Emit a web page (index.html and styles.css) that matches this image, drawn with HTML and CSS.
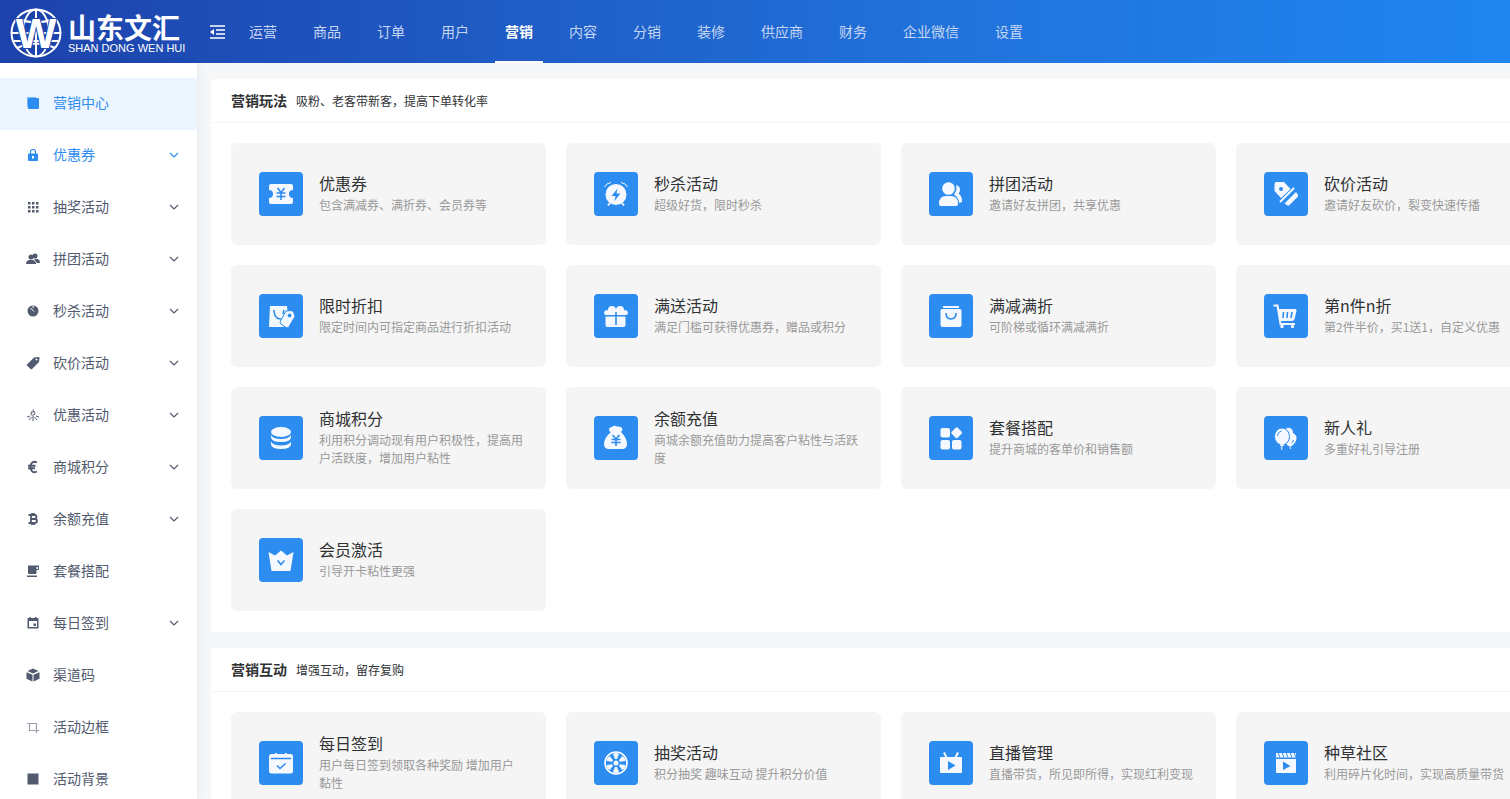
FILE: index.html
```html
<!DOCTYPE html>
<html lang="zh-CN">
<head>
    <meta charset="UTF-8">
    <meta name="viewport" content="width=device-width, initial-scale=1.0">
    <title>营销中心</title>
    <link rel="stylesheet" href="styles.css">
</head>

<body>

  <svg class="sprite" aria-hidden="true">
    <symbol id="arrow" viewBox="0 0 10 10"><path d="M1 3l4 4 4-4" fill="none" stroke="currentColor" stroke-width="1.2"/></symbol>
  </svg>

  <header class="header">
    <a class="logo" href="#" aria-label="山东文汇">
      <svg class="logoGlobe" viewBox="0 0 52 50">
        <g fill="none" stroke="#fff" stroke-width="2">
          <ellipse cx="26" cy="25" rx="24.5" ry="23.5"/>
          <ellipse cx="26" cy="25" rx="13" ry="23.5"/>
          <path d="M26 1v48M2 25h48M7 10q19 9 38 0M7 40q19-9 38 0M4 33h44"/>
        </g>
        <text class="logoW" x="26" y="40" text-anchor="middle">W</text>
      </svg>
      <span class="logoText">
        <span class="logoCn">山东文汇</span>
        <span class="logoEn">SHAN DONG WEN HUI</span>
      </span>
    </a>

    <button class="toggle" type="button" aria-label="收起菜单">
      <svg viewBox="0 0 16 14"><path d="M0 1h15M6 5h9M6 9h9M0 13h15" stroke="#fff" stroke-width="1.6"/><path d="M0 7l4-3v6z" fill="#fff"/></svg>
    </button>

    <nav class="tabs">
      <a href="#">运营</a>
      <a href="#">商品</a>
      <a href="#">订单</a>
      <a href="#">用户</a>
      <a href="#" class="current">营销</a>
      <a href="#">内容</a>
      <a href="#">分销</a>
      <a href="#">装修</a>
      <a href="#">供应商</a>
      <a href="#">财务</a>
      <a href="#">企业微信</a>
      <a href="#">设置</a>
    </nav>
  </header>

  <div class="main">

    <nav class="sidebar">
      <a class="item active" href="#">
        <svg class="icon" viewBox="0 0 14 14"><path d="M1 1h9v1H2v9H1z" opacity=".6"/><rect x="2" y="2" width="11" height="11" rx="1"/></svg>
        <span>营销中心</span>
      </a>
      <button class="item open" type="button">
        <svg class="icon" viewBox="0 0 14 14"><path d="M4.500 6V4a2.500 2.500 0 0 1 5 0v2" fill="none" stroke="currentColor" stroke-width="1.200"/><path fill-rule="evenodd" d="M3 5.500h8q1 0 1 1V12q0 1-1 1H3q-1 0-1-1V6.500q0-1 1-1zM6 8v2.500h2V8z"/></svg>
        <span>优惠券</span><svg class="arrow"><use href="#arrow"/></svg>
      </button>
      <button class="item" type="button">
        <svg class="icon" viewBox="0 0 14 14"><path d="M2 2h2.500v2.500H2zM6 2h2.500v2.500H6zM10 2h2.500v2.500H10zM2 6h2.500v2.500H2zM6 6h2.500v2.500H6zM10 6h2.500v2.500H10zM2 10h2.500v2.500H2zM6 10h2.500v2.500H6zM10 10h2.500v2.500H10z"/></svg>
        <span>抽奖活动</span><svg class="arrow"><use href="#arrow"/></svg>
      </button>
      <button class="item" type="button">
        <svg class="icon" viewBox="0 0 14 14"><circle cx="9" cy="4" r="2.500"/><path d="M8 7h4q2 1 2 4h-3z"/><circle cx="5" cy="5" r="2.500"/><path d="M0 12q0-3 3-4h4q3 1 3 4z"/></svg>
        <span>拼团活动</span><svg class="arrow"><use href="#arrow"/></svg>
      </button>
      <button class="item" type="button">
        <svg class="icon" viewBox="0 0 14 14"><circle cx="7" cy="7" r="5.500"/><path d="M4.500 4L8 7.500M7 2v2" stroke="#fff" fill="none"/></svg>
        <span>秒杀活动</span><svg class="arrow"><use href="#arrow"/></svg>
      </button>
      <button class="item" type="button">
        <svg class="icon" viewBox="0 0 14 14"><path fill-rule="evenodd" d="M8 1.500l4.500-.5q1 0 1 1L13 6 6 13q-1 .5-1.500 0L1 9.500q-.5-.5 0-1zM10.500 2.500a1 1 0 1 0 .1 2 1 1 0 0 0-.1-2z"/></svg>
        <span>砍价活动</span><svg class="arrow"><use href="#arrow"/></svg>
      </button>
      <button class="item" type="button">
        <svg class="icon" viewBox="0 0 14 14"><g fill="none" stroke="currentColor"><path d="M8 1.500q-4 2.500-3 5 1 1.500 3.500 0 1-2-.5-3.500L6.500 5M7 8v5M5.500 9L3 12M8.500 9l2.500 3M1 9l3-1M13 9l-3-1"/></g></svg>
        <span>优惠活动</span><svg class="arrow"><use href="#arrow"/></svg>
      </button>
      <button class="item" type="button">
        <svg class="icon" viewBox="0 0 14 14"><path d="M11 2.500C7 .5 4.500 3 4.500 7s2.500 6.500 6.500 4.500M2 5.800h7.500M2 8.300h7" fill="none" stroke="currentColor" stroke-width="1.900"/></svg>
        <span>商城积分</span><svg class="arrow"><use href="#arrow"/></svg>
      </button>
      <button class="item" type="button">
        <svg class="icon" viewBox="0 0 14 14"><path d="M2.500 3h6q2 0 2 2t-2 2H5M8.500 7Q11 7 11 9t-2.500 2h-6M5 3v8M6 1v2M8 1v2M6 11v2M8 11v2" fill="none" stroke="currentColor" stroke-width="1.800"/></svg>
        <span>余额充值</span><svg class="arrow"><use href="#arrow"/></svg>
      </button>
      <a class="item" href="#">
        <svg class="icon" viewBox="0 0 14 14"><path fill-rule="evenodd" d="M2 1.500h11v4.500h-2.500v3q0 1-1 1H3q-1 0-1-1zM10.500 3v2H12V3zM1 11.500h10V13H1z"/></svg>
        <span>套餐搭配</span>
      </a>
      <button class="item" type="button">
        <svg class="icon" viewBox="0 0 14 14"><path fill-rule="evenodd" d="M3.500 1H5v1h4V1h1.500v1H12q.5 0 .5.500V12q0 .5-.5.500H2q-.5 0-.5-.5V2.500Q1.500 2 2 2h1.500zM3 5v6h8V5zM7.500 7.500H10V10H7.500z"/></svg>
        <span>每日签到</span><svg class="arrow"><use href="#arrow"/></svg>
      </button>
      <a class="item" href="#">
        <svg class="icon" viewBox="0 0 14 14"><path d="M7 .5l5.500 2.500L7 5.500 1.500 3zM.5 4.200l6 2.600V13.500l-6-2.800zM13.500 4.200l-6 2.600V13.500l6-2.800z"/></svg>
        <span>渠道码</span>
      </a>
      <a class="item pale" href="#">
        <svg class="icon" viewBox="0 0 14 14"><path d="M1 3.500h9.500V13M3.500 3.500v7H13" fill="none" stroke="currentColor" stroke-width="1.200"/></svg>
        <span>活动边框</span>
      </a>
      <a class="item" href="#">
        <svg class="icon" viewBox="0 0 14 14"><path d="M1.500 1.500h11v11h-11z"/></svg>
        <span>活动背景</span>
      </a>
    </nav>

    <main class="content">

      <section class="panel">
        <div class="panelHead"><h2>营销玩法</h2><p>吸粉、老客带新客，提高下单转化率</p></div>
        <div class="cards">

          <a class="card" href="#">
            <svg class="tile" viewBox="0 0 44 44"><path class="w" d="M12 12h20q2 0 2 2v4a4 4 0 0 0 0 8v4q0 2-2 2H12q-2 0-2-2v-4a4 4 0 0 0 0-8v-4q0-2 2-2z"/><path class="b" d="M18.500 16l3.500 4.500 3.500-4.500M22 20.500V28M17.500 21h9M17.500 24.500h9"/></svg>
            <div><h3>优惠券</h3><p>包含满减券、满折券、会员券等</p></div>
          </a>
          <a class="card" href="#">
            <svg class="tile" viewBox="0 0 44 44"><path class="s thin" d="M10.500 15q2-4 6.500-4.500M33.500 15q-2-4-6.500-4.500"/><path class="s" d="M16 31l-2 2.500M28 31l2 2.500"/><circle class="w" cx="22" cy="22.500" r="10.500"/><path class="f" d="M23.500 16.500L17.500 24h4l-1 5 6-7.500h-4z"/></svg>
            <div><h3>秒杀活动</h3><p>超级好货，限时秒杀</p></div>
          </a>
          <a class="card" href="#">
            <svg class="tile" viewBox="0 0 44 44"><circle class="w" cx="19.500" cy="16.500" r="6.300"/><path class="w" d="M10 32q0-8 7-8h5q7 0 7 8 0 2-2 2H12q-2 0-2-2z"/><path class="w" d="M27 13q4 1 4 4.500 0 2.500-1.500 4 4 2.500 3.500 8.500l-3 1q0-5-5-8.500 3.500-4 2-9.500z"/></svg>
            <div><h3>拼团活动</h3><p>邀请好友拼团，共享优惠</p></div>
          </a>
          <a class="card" href="#">
            <svg class="tile" viewBox="0 0 44 44"><path class="w" fill-rule="evenodd" d="M12.500 10H20l6.500 7L17 26l-6.500-7v-7q0-2 2-2zM17 15a2 2 0 1 0 .1 4 2 2 0 0 0-.1-4z"/><path class="s" d="M16 30L30 16"/><path class="w" d="M32 20l2 3q.5 1-.5 2l-8 8q-1 1-2 .5l-3-2z"/></svg>
            <div><h3>砍价活动</h3><p>邀请好友砍价，裂变快速传播</p></div>
          </a>

          <a class="card" href="#">
            <svg class="tile" viewBox="0 0 44 44"><path class="w" d="M11 12h17l2 21H10z"/><path class="b" d="M15 16q0 9 7 9"/><path class="b" d="M25 16l-1 4"/><path class="w rim" fill-rule="evenodd" d="M27 17l6-.5q2.500 2 3 6l-6 10q-1 2-3 1l-5-3.500q-1.500-1-.5-3zM30.500 20a1.500 1.500 0 1 0 .1 3 1.500 1.500 0 0 0-.1-3z"/></svg>
            <div><h3>限时折扣</h3><p>限定时间内可指定商品进行折扣活动</p></div>
          </a>
          <a class="card" href="#">
            <svg class="tile" viewBox="0 0 44 44"><path class="w" d="M14 16q0-4 4-4 3 0 4 3 1-3 4-3 4 0 4 4 4 0 4 3 0 2-2 2H12q-2 0-2-2 0-3 4-3zM11.500 22.500h20V31q0 2-2 2h-16q-2 0-2-2z"/><path class="b" d="M22 18v13"/></svg>
            <div><h3>满送活动</h3><p>满足门槛可获得优惠券，赠品或积分</p></div>
          </a>
          <a class="card" href="#">
            <svg class="tile" viewBox="0 0 44 44"><path class="w" d="M14 12h16v2H14zM13 15h18q1.500 0 1.500 1.500V31q0 2-2 2h-17q-2 0-2-2V16.500Q11.500 15 13 15z"/><path class="b" d="M17 19q0 6 5 6t5-6"/></svg>
            <div><h3>满减满折</h3><p>可阶梯或循环满减满折</p></div>
          </a>
          <a class="card" href="#">
            <svg class="tile" viewBox="0 0 44 44"><path class="w" d="M14 15h17q2 0 1.500 2l-2 8q-.5 2-2.500 2H16z"/><path class="s" d="M9.500 11.500h4L16.500 30H31"/><path class="b" d="M19.500 18l-.5 6M23.500 18l-.5 6M28 18l-1 6"/><circle class="w" cx="18" cy="32.500" r="1.700"/><circle class="w" cx="28.500" cy="32.500" r="1.700"/></svg>
            <div><h3>第n件n折</h3><p>第2件半价，买1送1，自定义优惠</p></div>
          </a>

          <a class="card" href="#">
            <svg class="tile" viewBox="0 0 44 44"><ellipse class="w" cx="22" cy="16" rx="10" ry="5"/><path class="w" d="M12 19q2 4 10 4t10-4v2q0 5-10 5t-10-5zM12 25.500q2 4 10 4t10-4V28q0 5-10 5t-10-5z"/></svg>
            <div><h3>商城积分</h3><p>利用积分调动现有用户积极性，提高用户活跃度，增加用户粘性</p></div>
          </a>
          <a class="card" href="#">
            <svg class="tile" viewBox="0 0 44 44"><path class="w" d="M15 14q0-3 3-3 2-2 5-.5 5-.5 5.500 3-.5 2-2 2.500h-9Q15 16 15 14zM17 16h10q6 6 6 12 0 5-5 5H15q-5 0-5-5 0-6 7-12z"/><path class="b" d="M18.500 19l3.500 4 3.500-4M22 23v7M17.500 23.500h9M17.500 26.500h9"/></svg>
            <div><h3>余额充值</h3><p>商城余额充值助力提高客户粘性与活跃度</p></div>
          </a>
          <a class="card" href="#">
            <svg class="tile" viewBox="0 0 44 44"><g class="w"><rect x="11.500" y="12" width="9.500" height="9.500" rx="2"/><rect x="11.500" y="24" width="9.500" height="9.500" rx="2"/><rect x="23" y="24" width="9.500" height="9.500" rx="2"/><rect x="23.500" y="12.500" width="8.500" height="8.500" rx="1.500" transform="rotate(45 27.700 16.700)"/></g></svg>
            <div><h3>套餐搭配</h3><p>提升商城的客单价和销售额</p></div>
          </a>
          <a class="card" href="#">
            <svg class="tile" viewBox="0 0 44 44"><path class="w" d="M21 15q1-4 5-3 3 1 3 5 4 2 3.500 6-1 5-5.500 7h-2q-4-2-4-5z"/><ellipse class="w rim" cx="18" cy="20.500" rx="7.500" ry="8.500"/><path class="b thin" d="M13.500 20q0-4 4-5M29.500 24q0 2-2 3"/><path class="w" d="M16.500 28h3l.5 2h-4zM25 28.500h3l.5 1.500h-4z"/><path class="s thin" d="M18 30q-1 2 0 4M26.500 30q-1 1 0 3"/></svg>
            <div><h3>新人礼</h3><p>多重好礼引导注册</p></div>
          </a>

          <a class="card" href="#">
            <svg class="tile" viewBox="0 0 44 44"><path class="w" d="M9.500 14l6.500 3.500 6-5 6 5 6.500-3.500L31.500 33h-19z"/><path class="b" d="M18.500 22.500l3.500 4 3.500-4"/></svg>
            <div><h3>会员激活</h3><p>引导开卡粘性更强</p></div>
          </a>
        </div>
      </section>

      <section class="panel">
        <div class="panelHead"><h2>营销互动</h2><p>增强互动，留存复购</p></div>
        <div class="cards">

          <a class="card" href="#">
            <svg class="tile" viewBox="0 0 44 44"><path class="w" d="M12.500 13h19q2.500 0 2.500 2.500V30q0 2.500-2.500 2.500h-19Q10 32.500 10 30V15.500Q10 13 12.500 13z"/><path class="b" d="M12 17.500h20"/><path class="s" d="M17 12v4M27 12v4"/><path class="b" d="M18 24.500l3 3 5.500-5"/></svg>
            <div><h3>每日签到</h3><p>用户每日签到领取各种奖励 增加用户黏性</p></div>
          </a>
          <a class="card" href="#">
            <svg class="tile" viewBox="0 0 44 44"><circle cx="22" cy="22" r="11" fill="none" stroke="#fff" stroke-width="1.600"/><g class="w"><path id="blade" d="M21 18l-2-5q3-2 6 0l-2 5z"/><use href="#blade" transform="rotate(60 22 22)"/><use href="#blade" transform="rotate(120 22 22)"/><use href="#blade" transform="rotate(180 22 22)"/><use href="#blade" transform="rotate(240 22 22)"/><use href="#blade" transform="rotate(300 22 22)"/><circle cx="22" cy="22" r="2.500"/></g></svg>
            <div><h3>抽奖活动</h3><p>积分抽奖 趣味互动 提升积分价值</p></div>
          </a>
          <a class="card" href="#">
            <svg class="tile" viewBox="0 0 44 44"><path class="w" d="M12 16h20q1 0 1 1v14q0 1-1 1H12q-1 0-1-1V17q0-1 1-1z"/><path class="s" d="M15 11.500l2.500 5M29 11.500l-2.500 5"/><path class="f" d="M19 20l7.500 4.500-7.500 4.500z"/></svg>
            <div><h3>直播管理</h3><p>直播带货，所见即所得，实现红利变现</p></div>
          </a>
          <a class="card" href="#">
            <svg class="tile" viewBox="0 0 44 44"><path class="w" d="M12 12h20v4.500H12zM12 18h20v13q0 1-1 1H13q-1 0-1-1z"/><path class="b thin" d="M14 11.500l2 5M18 11.500l2 5M22 11.500l2 5M26 11.500l2 5M30 11.500l2 5"/><path class="f" d="M19 20.500l7.500 4.500-7.500 4z"/></svg>
            <div><h3>种草社区</h3><p>利用碎片化时间，实现高质量带货</p></div>
          </a>
        </div>
      </section>

    </main>
  </div>

</body>
</html>
```

FILE: styles.css
```css
* {
  box-sizing: border-box;
  margin: 0;
  padding: 0;
}

body {
  display: flex;
  flex-direction: column;
  height: 100vh;
  overflow: hidden;
  background: #f5f7f9;
  color: #515a6e;
  font-family: "Noto Sans CJK SC", sans-serif;
  font-size: 14px;
}

a {
  color: inherit;
  text-decoration: none;
}

button {
  border: none;
  background: none;
  font: inherit;
  color: inherit;
  cursor: pointer;
}

.sprite {
  position: absolute;
  width: 0;
  height: 0;
}

/* Topo */

.header {
  display: flex;
  flex: none;
  min-width: 1920px;
  height: 63px;
  background: linear-gradient(90deg, #1d42ab, #2173dc, #1e93ff);
}

.logo {
  display: flex;
  align-items: center;
  gap: 6px;
  width: 210px;
  padding: 3px 0 0 10px;
  color: #fff;
}

.logoGlobe {
  width: 52px;
  height: 50px;
}

.logoW {
  font: bold 43px "Liberation Sans", sans-serif;
  fill: #fff;
  stroke: #1e47b0;
  stroke-width: 2px;
  paint-order: stroke;
}

.logoText {
  display: flex;
  flex-direction: column;
}

.logoCn {
  font-size: 28px;
  font-weight: bold;
  line-height: 30px;
}

.logoEn {
  font: 11px/12px "Liberation Sans", sans-serif;
  white-space: nowrap;
}

.toggle {
  width: 16px;
}

.toggle svg {
  display: block;
  width: 16px;
  height: 14px;
}

.tabs {
  display: flex;
  gap: 16px;
  margin-left: 13px;
}

.tabs a {
  padding: 0 10px;
  line-height: 63px;
  color: #c6d6f3;
  white-space: nowrap;
}

.tabs .current {
  color: #fff;
  font-weight: bold;
  box-shadow: inset 0 -2px #fff;
}

/* Menu lateral */

.main {
  display: flex;
  flex: 1;
  min-height: 0;
}

.sidebar {
  flex: none;
  width: 197px;
  padding-top: 15px;
  overflow: hidden;
  background: #fff;
  box-shadow: 2px 0 8px rgba(29, 35, 41, 0.06);
}

.item {
  display: flex;
  align-items: center;
  width: 100%;
  height: 52px;
  padding: 0 18px 2px 26px;
  text-align: left;
}

.item.active {
  background: #edf5ff;
  color: #2d8cf0;
}

.item.open {
  color: #2d8cf0;
}

.item span {
  flex: 1;
  margin-left: 13px;
  padding-bottom: 2px;
}

.icon {
  width: 14px;
  height: 14px;
  fill: currentColor;
}

.pale .icon {
  color: #9ba1ad;
}

.arrow {
  width: 10px;
  height: 10px;
}

/* Conteudo */

.content {
  flex: 1;
  padding: 16px 14px;
}

.panel {
  min-width: 1360px;
  margin-bottom: 16px;
  border-radius: 4px;
  background: #fff;
}

.panelHead {
  display: flex;
  align-items: center;
  gap: 9px;
  height: 44px;
  padding: 0 20px;
  border-bottom: 1px solid #f3f4f5;
  color: #303133;
}

.panelHead h2 {
  padding-bottom: 2px;
  font-size: 14px;
}

.panelHead p {
  font-size: 12px;
}

.cards {
  display: grid;
  grid-template-columns: repeat(auto-fill, 315px);
  gap: 20px;
  padding: 20px 20px 21px;
}

.card {
  display: flex;
  align-items: center;
  gap: 16px;
  height: 102px;
  padding: 0 22px 0 28px;
  border-radius: 6px;
  background: #f5f5f5;
}

.card div {
  padding-bottom: 2px;
}

.card h3 {
  padding-bottom: 2px;
  font-size: 16px;
  font-weight: normal;
  line-height: 22px;
  color: #303133;
}

.card p {
  font-size: 12px;
  line-height: 18px;
  color: #999;
}

/* Icones dos cards */

.tile {
  flex: none;
  width: 44px;
  height: 44px;
  border-radius: 4px;
  background: #2d8cf0;
}

.w {
  fill: #f5f9ff;
}

.f {
  fill: #2d8cf0;
}

.b,
.s {
  fill: none;
  stroke: #2d8cf0;
  stroke-width: 1.6px;
}

.s {
  stroke: #f5f9ff;
  stroke-width: 2px;
}

.rim {
  stroke: #2d8cf0;
  stroke-width: 1px;
}

.thin {
  stroke-width: 1px;
}
```
